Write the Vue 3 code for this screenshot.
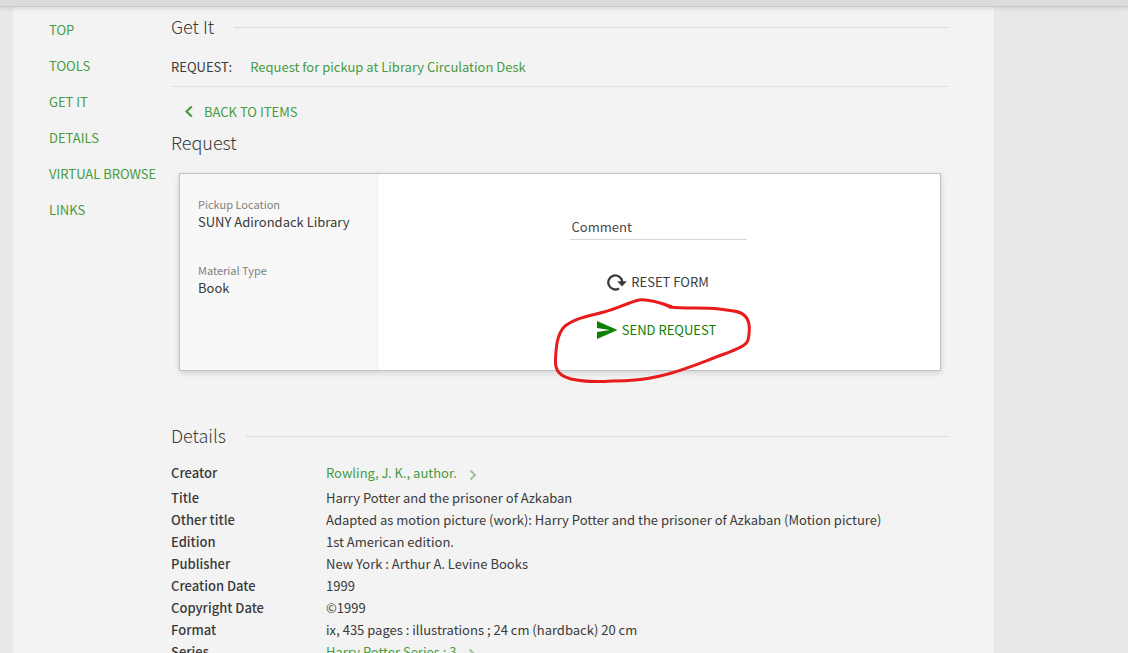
<script setup>
import { ref } from 'vue'

const links = ['TOP', 'TOOLS', 'GET IT', 'DETAILS', 'VIRTUAL BROWSE', 'LINKS']
const comment = ref('')
const details = [
  { label: 'Creator', value: 'Rowling, J. K., author.', link: true },
  { label: 'Title', value: 'Harry Potter and the prisoner of Azkaban' },
  { label: 'Other title', value: 'Adapted as motion picture (work): Harry Potter and the prisoner of Azkaban (Motion picture)' },
  { label: 'Edition', value: '1st American edition.' },
  { label: 'Publisher', value: 'New York : Arthur A. Levine Books' },
  { label: 'Creation Date', value: '1999' },
  { label: 'Copyright Date', value: '©1999' },
  { label: 'Format', value: 'ix, 435 pages : illustrations ; 24 cm (hardback) 20 cm' },
  { label: 'Series', value: 'Harry Potter Series ; 3', link: true },
]
</script>

<template>
  <div class="app">
    <header class="topbar"></header>
    <div class="page">
      <nav class="side" aria-label="Sections">
        <a v-for="l in links" :key="l" href="#">{{ l }}</a>
      </nav>
      <main class="main">
        <h2 class="heading ruled">Get It</h2>
        <div class="request-row">
          <span>REQUEST:</span>
          <a href="#">Request for pickup at Library Circulation Desk</a>
        </div>
        <button class="back" type="button">
          <svg width="10" height="14" viewBox="0 0 10 14"><path d="M7.8 1.500 2.500 6.500l5.300 5" fill="none" stroke="currentColor" stroke-width="2.2" /></svg>
          BACK TO ITEMS
        </button>
        <h3 class="heading">Request</h3>
        <section class="card">
          <dl class="facts">
            <div><dt>Pickup Location</dt><dd>SUNY Adirondack Library</dd></div>
            <div><dt>Material Type</dt><dd>Book</dd></div>
          </dl>
          <form class="form" @submit.prevent @reset="comment = ''">
            <input v-model="comment" type="text" aria-label="Comment" placeholder="Comment" />
            <button class="action" type="reset">
              <svg width="20" height="18" viewBox="0 0 20 18">
                <path d="M12 15.400A7 7 0 1 1 15.300 9" fill="none" stroke="currentColor" stroke-width="2.3" />
                <path d="M10.200 8.200h9.600l-4.800 5.200z" fill="currentColor" />
              </svg>
              RESET FORM
            </button>
            <div class="send-wrap">
              <button class="action send" type="submit">
                <svg width="22" height="18" viewBox="0 0 22 18"><path d="M1 0 21.500 9 1 18v-7L14 9 1 7z" fill="currentColor" /></svg>
                SEND REQUEST
              </button>
              <svg class="mark" width="206" height="94" viewBox="550 294 206 94" aria-hidden="true">
                <path d="M672 307C661 303 648 299 639 300C629 302 617 309 604 312C590 316 574 318 564 327C557 335 556 347 555.500 360C555 371 560 376 571 379C584 382 597 382 612 381C628 381 644 380 660 376C686 370 707 360 727 353C737 349 746 346 748 340C750 331 751 321 744 315C738 310 731 311 719 309C703 307 686 309 670 307" />
                <path d="M664 304l6 3" />
              </svg>
            </div>
          </form>
        </section>
        <h2 class="heading ruled">Details</h2>
        <dl class="details">
          <div v-for="d in details" :key="d.label" :class="{ linked: d.link }">
            <dt>{{ d.label }}</dt>
            <dd>
              <a v-if="d.link" href="#">{{ d.value }}<svg width="8" height="12" viewBox="0 0 8 12"><path d="m1.500 1.500 4.500 4.500-4.500 4.500" fill="none" stroke="currentColor" stroke-width="2" /></svg></a>
              <template v-else>{{ d.value }}</template>
            </dd>
          </div>
        </dl>
      </main>
    </div>
  </div>
</template>

<style>
body {
  margin: 0;
  background: #e8e8e8;
}
</style>

<style scoped>
.app {
  height: 100vh;
  overflow: hidden;
  display: flex;
  flex-direction: column;
  font: 13px/22px "Noto Sans CJK SC", "Noto Sans", sans-serif;
  color: #3a3a3a;
}
.topbar {
  flex: none;
  height: 6px;
  background: #dcdcdc;
  border-bottom: 1px solid #c8c8c8;
  box-shadow: 0 1px 4px rgba(0, 0, 0, 0.14);
  z-index: 1;
}
.page {
  flex: 1 0 auto;
  margin: 0 134px 0 13px;
  padding-right: 45px;
  background: #f3f3f3;
  display: grid;
  grid-template-columns: 158px 1fr;
}
a {
  color: #479b41;
  text-decoration: none;
}
.side {
  padding: 5px 0 0 36px;
  display: flex;
  flex-direction: column;
  line-height: 36px;
  white-space: nowrap;
}
.main {
  min-width: 0;
  padding-top: 5px;
}
.heading {
  margin: 0;
  display: flex;
  align-items: center;
  gap: 20px;
  font-size: 18px;
  font-weight: 300;
  line-height: 28px;
}
.ruled::after {
  content: "";
  flex: 1;
  height: 1px;
  margin-top: 2px;
  background: #dadada;
}
.request-row {
  display: flex;
  gap: 18px;
  padding: 16px 0 8px;
  border-bottom: 1px solid #e2e2e2;
}
button {
  border: 0;
  padding: 0;
  background: none;
  font: inherit;
  line-height: 24px;
  display: flex;
  align-items: center;
  cursor: pointer;
}
.back {
  margin: 13px 0 4px 13px;
  gap: 10px;
  color: #479b41;
}
.card {
  margin: 17px 8px 50px;
  display: grid;
  grid-template-columns: 198px 1fr;
  background: #fff;
  border: 1px solid #c1c1c1;
  box-shadow: 0 2px 6px rgba(0, 0, 0, 0.14);
}
.facts {
  margin: 0;
  padding: 22px 18px;
  display: grid;
  align-content: start;
  gap: 32px;
  background: #f8f8f8;
  border-right: 1px solid #eee;
  line-height: 17px;
  white-space: nowrap;
}
.facts dt {
  font-size: 11px;
  color: #808080;
}
dd {
  margin: 0;
}
.form {
  display: flex;
  flex-direction: column;
  align-items: center;
  padding: 40px 2px 28px 0;
}
input {
  box-sizing: border-box;
  width: 177px;
  height: 26px;
  margin-bottom: 30px;
  padding: 0 2px;
  border: 0;
  border-bottom: 1px solid #d6d6d6;
  outline: 0;
  background: none;
  font: inherit;
  color: inherit;
}
input::placeholder {
  color: #484848;
  opacity: 1;
}
.action {
  gap: 4px;
  color: #3a3a3a;
}
.send-wrap {
  position: relative;
  margin: 24px 4px 0 0;
}
.send {
  color: #0f8002;
}
.mark {
  position: absolute;
  left: -46px;
  top: -24px;
  pointer-events: none;
}
.mark path {
  fill: none;
  stroke: #e81c1c;
  stroke-width: 3;
  stroke-linecap: round;
}
.details {
  margin: 13px 0 0;
}
.details > div {
  display: grid;
  grid-template-columns: 155px 1fr;
}
.details .linked {
  padding-bottom: 3px;
}
.details dt {
  font-weight: 500;
}
.details a svg {
  margin-left: 12px;
  vertical-align: -3px;
  opacity: 0.5;
}
</style>
